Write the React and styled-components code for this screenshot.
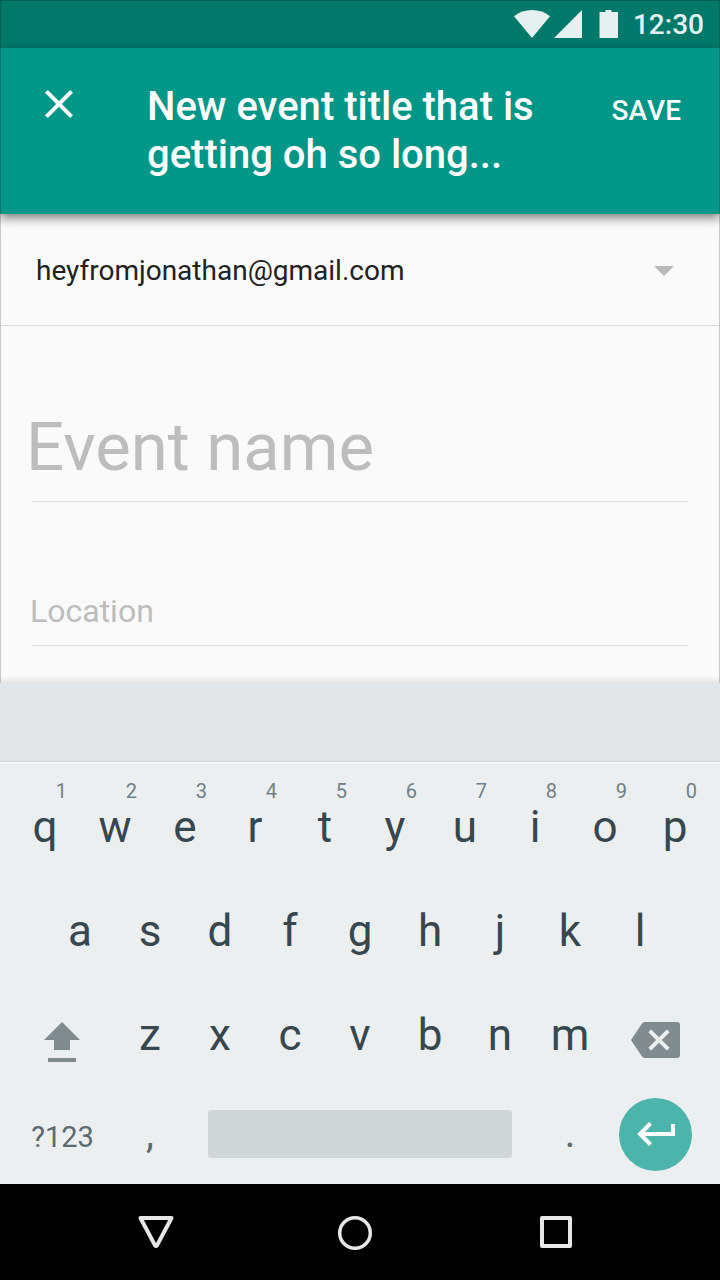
import React from "react";
import styled, { createGlobalStyle, css } from "styled-components";

const GlobalStyle = createGlobalStyle`
  *, *::before, *::after { box-sizing: border-box; }
  body { margin: 0; background: #fafafa; font-family: Roboto, "Liberation Sans", sans-serif; }
  button, input, select { font: inherit; color: inherit; border: 0; padding: 0; margin: 0; background: none; border-radius: 0; }
  button { cursor: pointer; }
  svg { display: block; flex: none; }
`;

const frameEdge = css`
  border: 0 solid rgba(0, 0, 0, 0.2);
  border-left-width: 1px;
  border-right-width: 1px;
`;

const Screen = styled.div`
  display: flex;
  flex-direction: column;
  min-height: 100vh;
  background: #fafafa;
`;

const StatusBar = styled.div`
  ${frameEdge}
  border-top-width: 1px;
  display: flex;
  align-items: center;
  justify-content: flex-end;
  height: 48px;
  padding: 0 15px 1px 0;
  background: #00796b;
  color: #e5f1f0;
`;

const Signals = styled.div`
  display: flex;
  gap: 4px;
  margin-right: 17px;
`;

const Clock = styled.time`
  margin-left: 15px;
  padding-top: 2px;
  font-size: 28px;
  line-height: 32px;
  font-weight: 500;
`;

const AppBar = styled.header`
  ${frameEdge}
  position: relative;
  display: flex;
  align-items: flex-start;
  padding: 35px 38px 35px 35px;
  background: #009688;
  color: #fff;
  box-shadow: 0 4px 10px rgba(0, 0, 0, 0.5);
`;

const CloseButton = styled.button`
  display: grid;
  place-items: center;
  width: 46px;
  height: 42px;
`;

const Title = styled.h1`
  flex: 1;
  max-width: 400px;
  margin: 0 auto 0 65px;
  font-size: 40px;
  line-height: 48px;
  font-weight: 500;
`;

const SaveButton = styled.button`
  height: 54px;
  font-size: 28px;
  font-weight: 500;
  font-kerning: none;
`;

const Form = styled.form`
  ${frameEdge}
  flex: 1;
  display: flex;
  flex-direction: column;
`;

const AccountRow = styled.div`
  display: grid;
  align-items: center;
  height: 112px;
  padding-top: 2px;
  border-bottom: 1px solid #dadada;

  & > * {
    grid-area: 1 / 1;
  }

  svg {
    justify-self: end;
    margin-right: 45px;
    pointer-events: none;
  }
`;

const AccountSelect = styled.select`
  appearance: none;
  width: 100%;
  height: 100%;
  padding: 0 80px 0 35px;
  font-size: 28px;
  color: #212121;
  outline: 0;
`;

const Field = styled.div`
  display: flex;
  flex-direction: column;
  padding: ${(p) => (p.$large ? "72px 31px 0 25px" : "72px 31px 0 29px")};
`;

const FieldInput = styled.input`
  width: 100%;
  height: ${(p) => (p.$large ? "103px" : "71px")};
  padding: ${(p) => (p.$large ? "0 0 6px" : "2px 0 0")};
  font-size: ${(p) => (p.$large ? "67px" : "32px")};
  color: #212121;
  outline: 0;

  &::placeholder {
    color: #bdbdbd;
    opacity: 1;
  }
`;

const FieldRule = styled.div`
  height: 1px;
  margin-left: ${(p) => (p.$large ? "6px" : "2px")};
  background: #dadada;
`;

const Keyboard = styled.section`
  position: relative;
  background: #ebefef;
  color: #37474f;
  box-shadow: 0 0 8px rgba(0, 0, 0, 0.2);
`;

const Suggestions = styled.div`
  height: 79px;
  background: #e3e7e9;
  border-bottom: 1px solid #cdd1d2;
`;

const Keys = styled.div`
  padding: 12px 10px 3px;
  border-top: 1px solid #fff;
`;

const KeyRow = styled.div`
  display: flex;
  height: ${(p) => (p.$last ? "94px" : "104px")};
  padding: 0 ${(p) => (p.$inset ? "5%" : "0")};
`;

const Key = styled.button`
  flex: ${(p) => p.$span || 2} 1 0;
  min-width: 0;
  display: grid;
  place-items: center;
  font-size: 44px;
  line-height: 52px;

  & > * {
    grid-area: 1 / 1;
  }
`;

const EdgeKey = styled(Key)`
  & > * {
    margin-right: ${(p) => (p.$end ? "4px" : "2px")};
  }
`;

const SymbolKey = styled(Key)`
  padding-top: ${(p) => (p.$small ? "6px" : "0")};
  font-size: ${(p) => (p.$small ? "29px" : "40px")};
  color: #5b6b72;
`;

const Hint = styled.small`
  align-self: start;
  justify-self: end;
  margin-right: 13px;
  font-size: 20px;
  line-height: 32px;
  color: #6f8188;
`;

const SpaceBar = styled.span`
  justify-self: stretch;
  height: 48px;
  margin: 0 23px;
  border-radius: 3px;
  background: #d1d6d9;
`;

const EnterDisc = styled.span`
  display: grid;
  place-items: center;
  width: 73px;
  height: 73px;
  border-radius: 50%;
  background: #4cb5ab;
`;

const NavBar = styled.nav`
  display: flex;
  justify-content: center;
  height: 96px;
  padding-right: 8px;
  background: #000;
`;

const NavButton = styled.button`
  display: grid;
  place-items: center;
  width: 200px;
`;

const hintedKeys = [
  ["q", 1], ["w", 2], ["e", 3], ["r", 4], ["t", 5],
  ["y", 6], ["u", 7], ["i", 8], ["o", 9], ["p", 0],
];

const letters = (text) => text.split("").map((c) => <Key type="button" key={c}>{c}</Key>);

export default function App() {
  return (
    <Screen>
      <GlobalStyle />
      <StatusBar>
        <Signals>
          <svg width="36" height="28" viewBox="0 0 36 28" fill="currentColor" aria-hidden="true">
            <path d="M18 28 0 6.2C5 2.200 11.200 0 18 0s13 2.200 18 6.200z" />
          </svg>
          <svg width="28" height="28" viewBox="0 0 28 28" fill="currentColor" aria-hidden="true">
            <path d="M0 28 28 0v28z" />
          </svg>
        </Signals>
        <svg width="19" height="28" viewBox="0 0 19 28" fill="currentColor" aria-hidden="true">
          <path d="M6.500 0h6v2H19v26H.5V2h6z" />
        </svg>
        <Clock>12:30</Clock>
      </StatusBar>

      <AppBar>
        <CloseButton type="button" aria-label="Close">
          <svg width="28" height="28" viewBox="0 0 28 28" fill="none" stroke="currentColor" strokeWidth="4" aria-hidden="true">
            <path d="M1.400 1.400 26.600 26.600M26.600 1.400 1.400 26.600" />
          </svg>
        </CloseButton>
        <Title>New event title that is getting oh so long...</Title>
        <SaveButton type="submit" form="event">SAVE</SaveButton>
      </AppBar>

      <Form id="event" onSubmit={(e) => e.preventDefault()}>
        <AccountRow>
          <AccountSelect aria-label="Account">
            <option>heyfromjonathan@gmail.com</option>
          </AccountSelect>
          <svg width="20" height="10" viewBox="0 0 20 10" fill="#b9b9b9" aria-hidden="true">
            <path d="M0 0h20L10 10z" />
          </svg>
        </AccountRow>
        <Field $large>
          <FieldInput $large aria-label="Event name" placeholder="Event name" />
          <FieldRule $large />
        </Field>
        <Field>
          <FieldInput aria-label="Location" placeholder="Location" />
          <FieldRule />
        </Field>
      </Form>

      <Keyboard aria-label="Keyboard">
        <Suggestions />
        <Keys>
          <KeyRow>
            {hintedKeys.map(([letter, digit]) => (
              <Key type="button" key={letter}>
                <span>{letter}</span>
                <Hint>{digit}</Hint>
              </Key>
            ))}
          </KeyRow>
          <KeyRow $inset>{letters("asdfghjkl")}</KeyRow>
          <KeyRow>
            <EdgeKey type="button" $span={3} aria-label="Shift">
              <svg width="36" height="54" viewBox="0 0 36 54" fill="#7f8b8f" aria-hidden="true">
                <path d="M18 14 36 32H26v10H10V32H0zM4 50h28v4H4z" />
              </svg>
            </EdgeKey>
            {letters("zxcvbnm")}
            <EdgeKey type="button" $span={3} $end aria-label="Backspace">
              <svg width="50" height="46" viewBox="0 0 50 46" aria-hidden="true">
                <path d="M13.500 10H46a3 3 0 0 1 3 3v30a3 3 0 0 1-3 3H13.500a3 3 0 0 1-2.500-1.500L0 28 11 11.500A3 3 0 0 1 13.500 10z" fill="#7f8b8f" />
                <path d="M18.800 18.800 37.200 37.200M37.200 18.800 18.800 37.200" stroke="#ebefef" strokeWidth="4" />
              </svg>
            </EdgeKey>
          </KeyRow>
          <KeyRow $last>
            <SymbolKey type="button" $span={3} $small>?123</SymbolKey>
            <SymbolKey type="button">,</SymbolKey>
            <Key type="button" $span={10} aria-label="Space">
              <SpaceBar />
            </Key>
            <SymbolKey type="button">.</SymbolKey>
            <EdgeKey type="button" $span={3} $end aria-label="Enter">
              <EnterDisc>
                <svg width="38" height="24" viewBox="0 0 38 24" fill="none" stroke="#fff" strokeWidth="4" aria-hidden="true">
                  <path d="M13.500 1.500 3 12l10.500 10.500M3 12h33V2" />
                </svg>
              </EnterDisc>
            </EdgeKey>
          </KeyRow>
        </Keys>
      </Keyboard>

      <NavBar aria-label="System">
        <NavButton type="button" aria-label="Back">
          <svg width="36" height="32" viewBox="0 0 36 32" fill="none" stroke="#e6e6e6" strokeWidth="4" strokeLinejoin="round" aria-hidden="true">
            <path d="M2.500 2h31L19 29.400q-1 1.200-2 0z" />
          </svg>
        </NavButton>
        <NavButton type="button" aria-label="Home">
          <svg width="36" height="36" viewBox="0 0 36 36" fill="none" stroke="#e6e6e6" strokeWidth="3.500" aria-hidden="true">
            <circle cx="17" cy="19" r="15.300" />
          </svg>
        </NavButton>
        <NavButton type="button" aria-label="Overview">
          <svg width="32" height="32" viewBox="0 0 32 32" fill="none" stroke="#e6e6e6" strokeWidth="4" strokeLinejoin="round" aria-hidden="true">
            <path d="M2 2h28v28H2z" />
          </svg>
        </NavButton>
      </NavBar>
    </Screen>
  );
}
